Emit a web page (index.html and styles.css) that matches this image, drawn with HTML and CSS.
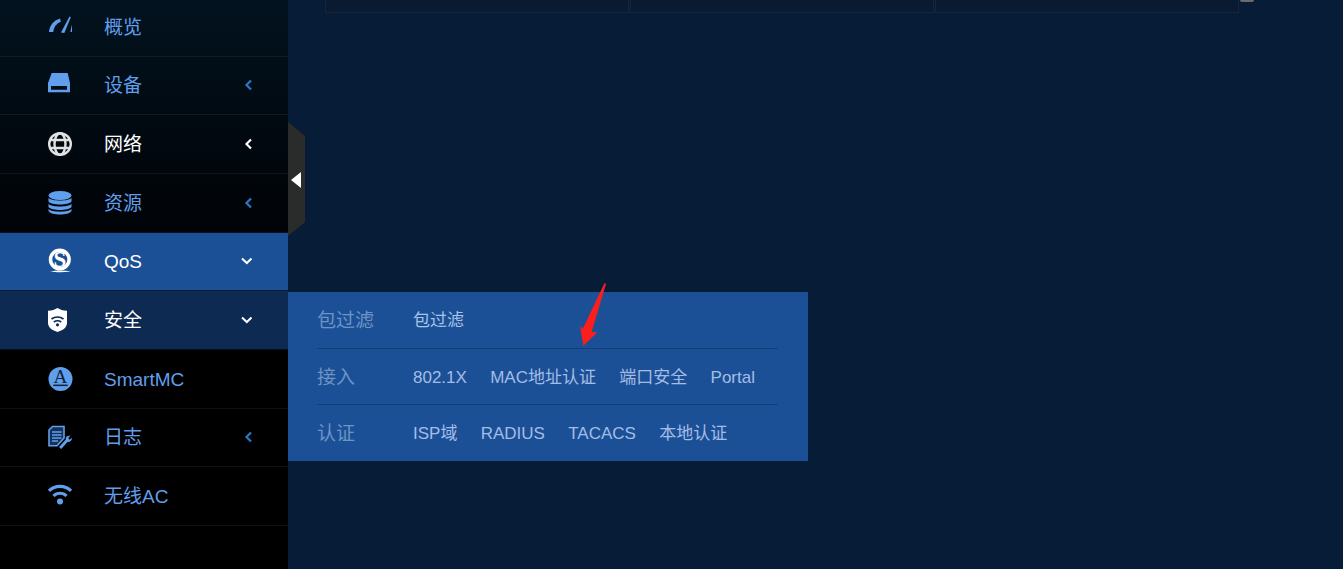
FILE: index.html
```html
<!DOCTYPE html>
<html lang="zh-CN">
<head>
  <meta charset="UTF-8">
  <title>安全</title>
  <link rel="stylesheet" href="styles.css">
</head>
<body>
  <div class="sidebar">
    <div class="nav">
      <div class="nav-item">
        <svg class="nav-icon" viewBox="0 0 24 24"><path d="M1 17C1.500 10.500 5.500 5.500 12 3.500L12.800 6.800C8.500 8.500 5.800 12 5.300 17Z"/><path d="M13 17.500L21.500 1.500 22.800 2.300 16.300 18Z"/><path d="M22.500 17C22.800 14.500 23.200 12 24 9.500V17Z"/></svg>
        <span class="nav-text">概览</span>
      </div>
      <div class="nav-item">
        <svg class="nav-icon" viewBox="0 0 24 24"><path d="M3.700 0H19.700L22 10V19.300H0V10ZM3 13V16.700H19V13Z" fill-rule="evenodd"/></svg>
        <span class="nav-text">设备</span>
        <svg class="chevron" viewBox="0 0 8 12"><path d="M7 1.500L2.500 6 7 10.500"/></svg>
      </div>
      <div class="nav-item nav-item-open">
        <svg class="nav-icon" viewBox="0 0 24 24"><g class="line-icon"><circle cx="12" cy="12" r="10.800"/><ellipse cx="12" cy="12" rx="5.500" ry="10.800"/><path d="M2 8H22M2 16H22"/></g></svg>
        <span class="nav-text">网络</span>
        <svg class="chevron" viewBox="0 0 8 12"><path d="M7 1.500L2.500 6 7 10.500"/></svg>
      </div>
      <div class="nav-item">
        <svg class="nav-icon" viewBox="0 0 24 24"><ellipse cx="12" cy="4.500" rx="11.500" ry="4.500"/><path d="M.5 6.800C3 10.500 21 10.500 23.500 6.800V10.500C21 14.500 3 14.500 .5 10.500Z"/><path d="M.5 12.800C3 16.500 21 16.500 23.500 12.800V16C21 20 3 20 .5 16Z"/><path d="M.5 18C3 21.500 21 21.500 23.500 18V20C21 24.800 3 24.800 .5 20Z"/></svg>
        <span class="nav-text">资源</span>
        <svg class="chevron" viewBox="0 0 8 12"><path d="M7 1.500L2.500 6 7 10.500"/></svg>
      </div>
      <div class="nav-item nav-item-active">
        <svg class="nav-icon" viewBox="0 0 24 24"><circle cx="11.800" cy="10.500" r="9.300" fill="none" stroke="#fff" stroke-width="3.500"/><text class="logo-letter" x="11.800" y="18" text-anchor="middle">S</text><path d="M2 22.500C8 21 16 21 23 22.500 16 23.500 8 23.500 2 22.500Z"/></svg>
        <span class="nav-text">QoS</span>
        <svg class="chevron chevron-down" viewBox="0 0 12 8"><path d="M2 1.500L6.800 6l4.700-4.500"/></svg>
      </div>
      <div class="nav-item nav-item-current">
        <svg class="nav-icon" viewBox="0 0 24 24"><path d="M9.500 0C12 1.500 15 2.600 19 2.800V15C19 19.500 14.500 22.500 9.500 24 4.500 22.500 0 19.500 0 15V2.800C4 2.600 7 1.500 9.500 0Z"/><g class="wifi-cut"><path d="M3.500 11C7 8.300 12 8.300 15.500 11"/><path d="M5.800 14C8 12.500 11 12.500 13.200 14"/></g><circle cx="9.500" cy="16.800" r="1.600" fill="#0c2a52"/></svg>
        <span class="nav-text">安全</span>
        <svg class="chevron chevron-down" viewBox="0 0 12 8"><path d="M2 1.500L6.800 6l4.700-4.500"/></svg>
      </div>
      <div class="nav-item">
        <svg class="nav-icon nav-icon-wide" viewBox="0 0 25 25"><circle cx="12.500" cy="12.500" r="12.500"/><text class="logo-letter logo-letter-dark" x="12.500" y="17" text-anchor="middle">A</text><rect x="5" y="18.300" width="15" height="1.600" fill="#14233a"/></svg>
        <span class="nav-text">SmartMC</span>
      </div>
      <div class="nav-item">
        <svg class="nav-icon" viewBox="0 0 24 24"><path class="doc-sheet" d="M4.500 1.500H16V13L9 20.700H1V5Z"/><path class="doc-lines" d="M4 7H13.500M4 10H13.500M4 13H13.500M4 16H10"/><path d="M11 22L17.800 14.500C17.300 12 19.300 10.200 22.300 10.800L20.300 13 21.500 14.700 23.900 12.800C24 15.500 22.300 17.300 19.600 17L13.200 24Z"/></svg>
        <span class="nav-text">日志</span>
        <svg class="chevron" viewBox="0 0 8 12"><path d="M7 1.500L2.500 6 7 10.500"/></svg>
      </div>
      <div class="nav-item">
        <svg class="nav-icon" viewBox="0 0 24 24"><g class="wifi-line"><path d="M1 6.800C7 .8 17 .8 23 6.800"/><path d="M5.500 12C9 8.300 15 8.300 18.500 12"/></g><circle cx="12" cy="17.500" r="3"/></svg>
        <span class="nav-text">无线AC</span>
      </div>
    </div>
  </div>

  <div class="collapse-handle"></div>

  <div class="flyout">
    <div class="flyout-row">
      <span class="flyout-label">包过滤</span>
      <div class="flyout-links"><a class="flyout-link-first">包过滤</a></div>
    </div>
    <div class="flyout-row">
      <span class="flyout-label">接入</span>
      <div class="flyout-links"><a>802.1X</a><a>MAC地址认证</a><a>端口安全</a><a>Portal</a></div>
    </div>
    <div class="flyout-row">
      <span class="flyout-label">认证</span>
      <div class="flyout-links"><a>ISP域</a><a>RADIUS</a><a>TACACS</a><a>本地认证</a></div>
    </div>
  </div>

  <svg class="red-arrow" viewBox="0 0 30 66"><path d="M26.500 2L28 3 13.700 50.700 19.300 51.300 5.300 64.700 2 44.700 4.700 48Z"/></svg>

  <div class="content">
    <div class="table-bottom">
      <div class="table-cell"></div>
      <div class="table-cell"></div>
      <div class="table-cell"></div>
    </div>
    <div class="scroll-nub"></div>
  </div>
</body>
</html>
```

FILE: styles.css
```css
html, body {
  height: 100%;
}
body {
  margin: 0;
  background: #071c37;
  font-family: "Liberation Sans", "Noto Sans CJK SC", sans-serif;
  overflow: hidden;
  display: flex;
}
.sidebar {
  width: 288px;
  height: 569px;
  flex: none;
  overflow: hidden;
  background: linear-gradient(180deg, #02131f 0%, #01060c 30%, #000 55%);
}
.nav {
  margin-top: -2px;
}
.nav-item {
  height: 58.67px;
  box-sizing: border-box;
  display: flex;
  align-items: center;
  padding: 0 36px 0 48px;
  color: #609fec;
  border-bottom: 1px solid rgba(255,255,255,0.06);
}
.nav-item-open {
  color: #fff;
}
.nav-item-active {
  background: #1c5096;
  color: #fff;
  border-bottom: 1px solid #061b36;
}
.nav-item-current {
  background: #0c2a52;
  color: #fff;
  border-bottom: 1px solid #04101f;
}
.nav-icon {
  width: 24px;
  height: 24px;
  flex: none;
  fill: currentColor;
  overflow: visible;
}
.nav-icon-wide {
  width: 25px;
  margin-right: -1px;
}
.line-icon {
  fill: none;
  stroke: currentColor;
  stroke-width: 2.4;
  opacity: 0.88;
}
.wifi-cut {
  fill: none;
  stroke: #0c2a52;
  stroke-width: 1.6;
}
.wifi-line {
  fill: none;
  stroke: currentColor;
  stroke-width: 3.2;
}
.doc-sheet {
  fill: #16315a;
  stroke: currentColor;
  stroke-width: 1.6;
}
.doc-lines {
  fill: none;
  stroke: currentColor;
  stroke-width: 1.5;
}
.logo-letter {
  font-family: "Liberation Serif", serif;
  font-size: 23px;
  font-weight: 700;
}
.logo-letter-dark {
  fill: #14233a;
  font-size: 20px;
  font-weight: 400;
}
.nav-text {
  font-size: 19px;
  margin-left: 32px;
  flex: 1;
}
/* latin and cjk fallback have different metrics, this keeps one baseline */
.nav-text:before,
.flyout-label:before,
.flyout-links a:before {
  content: "";
  display: inline-block;
  height: 40px;
  vertical-align: -13px;
}
.flyout-links a:before {
  vertical-align: -14px;
}
.chevron {
  width: 8px;
  height: 12px;
  flex: none;
  fill: none;
  stroke: #2a77c8;
  stroke-width: 2.2;
}
.nav-item-open .chevron {
  stroke: #fff;
}
.chevron-down {
  width: 12px;
  height: 8px;
  stroke: #fff;
  stroke-width: 2;
}
.collapse-handle {
  position: absolute;
  left: 288px;
  top: 122px;
  width: 17px;
  height: 114px;
  background: #2a2b2b;
  clip-path: polygon(0 0, 100% 12%, 100% 88%, 0 100%);
}
.collapse-handle:before {
  content: "";
  position: absolute;
  left: 3px;
  top: 50px;
  border-style: solid;
  border-width: 8px 10px 8px 0;
  border-color: transparent #fff transparent transparent;
}
.flyout {
  position: absolute;
  left: 288px;
  top: 292px;
  width: 520px;
  height: 169px;
  box-sizing: border-box;
  padding: 0 30px 0 29px;
  background: #1c5096;
  display: flex;
  flex-direction: column;
}
.flyout-row {
  flex: 1;
  display: flex;
  align-items: center;
  border-bottom: 1px solid #153e75;
}
.flyout-row:last-child {
  border-bottom: none;
}
.flyout-label {
  width: 96px;
  flex: none;
  font-size: 19px;
  color: #6c94c6;
}
.flyout-links {
  display: flex;
  gap: 23.3px;
  font-size: 17px;
  color: #a3bde6;
}
.flyout-link-first {
  color: #aac4ea;
}
.red-arrow {
  position: absolute;
  left: 578px;
  top: 281px;
  width: 30px;
  height: 66px;
  fill: #fa1f1c;
}
.content {
  flex: 1;
  padding-left: 37px;
  display: flex;
  align-items: flex-start;
}
.table-bottom {
  width: 914px;
  height: 13px;
  display: flex;
  gap: 1px;
}
.table-cell {
  flex: 1;
  background: #0a1a30;
  border: 1px solid #14253c;
  border-top: none;
}
.scroll-nub {
  width: 14px;
  height: 2px;
  margin-left: 1px;
  background: #6b6b6b;
  border-radius: 0 0 3px 3px;
}
```
